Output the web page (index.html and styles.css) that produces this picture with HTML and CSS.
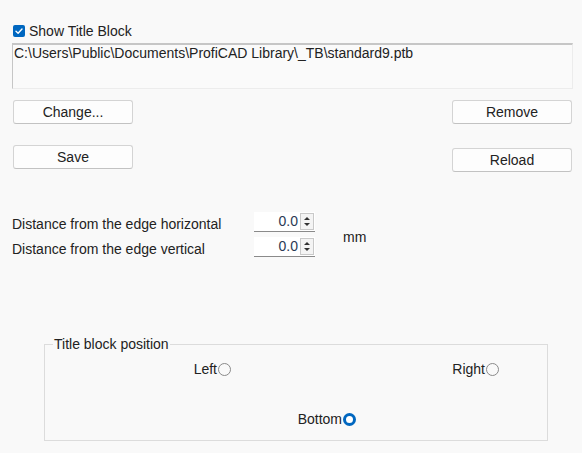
FILE: index.html
```html
<!DOCTYPE html>
<html>
<head>
<meta charset="utf-8">
<link rel="stylesheet" href="styles.css">
</head>
<body>
<div class="page">
  <label class="check-row">
    <span class="checkbox">
      <svg width="12" height="12" viewBox="0 0 12 12"><path d="M3 6.2 L5.1 8.2 L9 4" fill="none" stroke="#fff" stroke-width="1.4" stroke-linecap="round" stroke-linejoin="round"/></svg>
    </span>
    <span>Show Title Block</span>
  </label>
  <div class="pathbox">C:\Users\Public\Documents\ProfiCAD Library\_TB\standard9.ptb</div>

  <div class="buttons">
    <div class="col col-left">
      <button class="btn">Change...</button>
      <button class="btn">Save</button>
    </div>
    <div class="col col-right">
      <button class="btn">Remove</button>
      <button class="btn">Reload</button>
    </div>
  </div>

  <div class="distance">
    <div class="dist-row">
      <span class="dist-label">Distance from the edge horizontal</span>
      <span class="spin"><span class="spin-val">0.0</span><span class="spin-btn"><span class="arr up"></span><span class="arr down"></span></span></span>
    </div>
    <div class="dist-row">
      <span class="dist-label">Distance from the edge vertical</span>
      <span class="spin"><span class="spin-val">0.0</span><span class="spin-btn"><span class="arr up"></span><span class="arr down"></span></span></span>
    </div>
    <span class="unit">mm</span>
  </div>

  <fieldset class="group">
    <legend>Title block position</legend>
    <div class="opt-row first">
      <div class="opt w-left"><span>Left</span><span class="radio"></span></div>
      <div class="opt w-right"><span>Right</span><span class="radio"></span></div>
    </div>
    <div class="opt-row second">
      <div class="opt w-bottom"><span>Bottom</span><span class="radio on"></span></div>
    </div>
  </fieldset>
</div>
</body>
</html>
```
FILE: styles.css
```css
html, body {
  margin: 0;
  padding: 0;
  background: #f9f9f9;
}
body {
  font-family: "Liberation Sans", Arial, sans-serif;
  font-size: 14px;
  color: #222;
  width: 582px;
  height: 453px;
  overflow: hidden;
}
.page {
  padding-top: 24px;
}
.check-row {
  display: flex;
  align-items: center;
  margin-left: 13px;
  height: 14px;
  gap: 4px;
}
.checkbox {
  width: 12px;
  height: 12px;
  border-radius: 2px;
  background: #0067c0;
  display: flex;
}
.pathbox {
  margin: 5px 9px 0 12px;
  height: 43px;
  border-top: 2px solid #c6c6c6;
  border-left: 1px solid #c6c6c6;
  border-right: 1px solid #ececec;
  border-bottom: 1px solid #ececec;
  background: #fafafa;
  padding: 0 0 0 1px;
  line-height: 16px;
  white-space: nowrap;
}
.buttons {
  display: flex;
  justify-content: space-between;
  margin: 11px 10px 0 13px;
}
.col {
  display: flex;
  flex-direction: column;
}
.col-left { gap: 21px; }
.col-right { gap: 24px; }
.btn {
  width: 120px;
  height: 24px;
  background: #fdfdfd;
  border: 1px solid #d4d4d4;
  border-bottom-color: #c2c2c2;
  border-radius: 3px;
  font-family: "Liberation Sans", Arial, sans-serif;
  font-size: 14px;
  color: #222;
  padding: 0;
  line-height: 20px;
}
.distance {
  display: grid;
  grid-template-columns: 242px 89px auto;
  row-gap: 5px;
  margin: 40px 0 0 12px;
  align-items: center;
}
.dist-row {
  display: contents;
}
.unit {
  grid-column: 3;
  grid-row: 1 / span 2;
  align-self: center;
  padding-top: 4px;
}
.dist-label {
  padding-top: 4px;
}
.spin {
  display: flex;
  width: 61px;
  height: 20px;
  background: #fff;
  box-sizing: border-box;
  border-bottom: 1px solid #8a8a8a;
}
.spin-val {
  flex: 1;
  text-align: right;
  line-height: 19px;
  padding-right: 2px;
  color: #2b3a55;
}
.spin-btn {
  width: 12px;
  margin: 1px 1px 1px 0;
  border: 1px solid #c9c9c9;
  display: flex;
  flex-direction: column;
  align-items: center;
  justify-content: space-evenly;
  background: #f4f4f4;
}
.arr {
  width: 0;
  height: 0;
  border-left: 3px solid transparent;
  border-right: 3px solid transparent;
}
.arr.up { border-bottom: 3px solid #333; }
.arr.down { border-top: 3px solid #333; }
.group {
  margin: 79px 0 0 44px;
  width: 502px;
  height: 103px;
  border: 1px solid #dcdcdc;
  padding: 0;
  box-sizing: content-box;
}
.group legend {
  margin-left: 8px;
  padding: 0 1px;
  line-height: 16px;
}
.opt-row {
  display: flex;
}
.opt-row.first { margin-top: 10px; }
.opt-row.second { margin-top: 36px; }
.opt {
  display: flex;
  justify-content: flex-end;
  align-items: center;
  height: 14px;
  gap: 1px;
}
.w-left { width: 186px; }
.w-right { width: 268px; }
.w-bottom { width: 311px; }
.radio {
  width: 13px;
  height: 13px;
  box-sizing: border-box;
  border: 1px solid #8a8a8a;
  border-radius: 50%;
  background: #f9f9f9;
}
.radio.on {
  border: 3.5px solid #0067c0;
  background: #fff;
}
```
